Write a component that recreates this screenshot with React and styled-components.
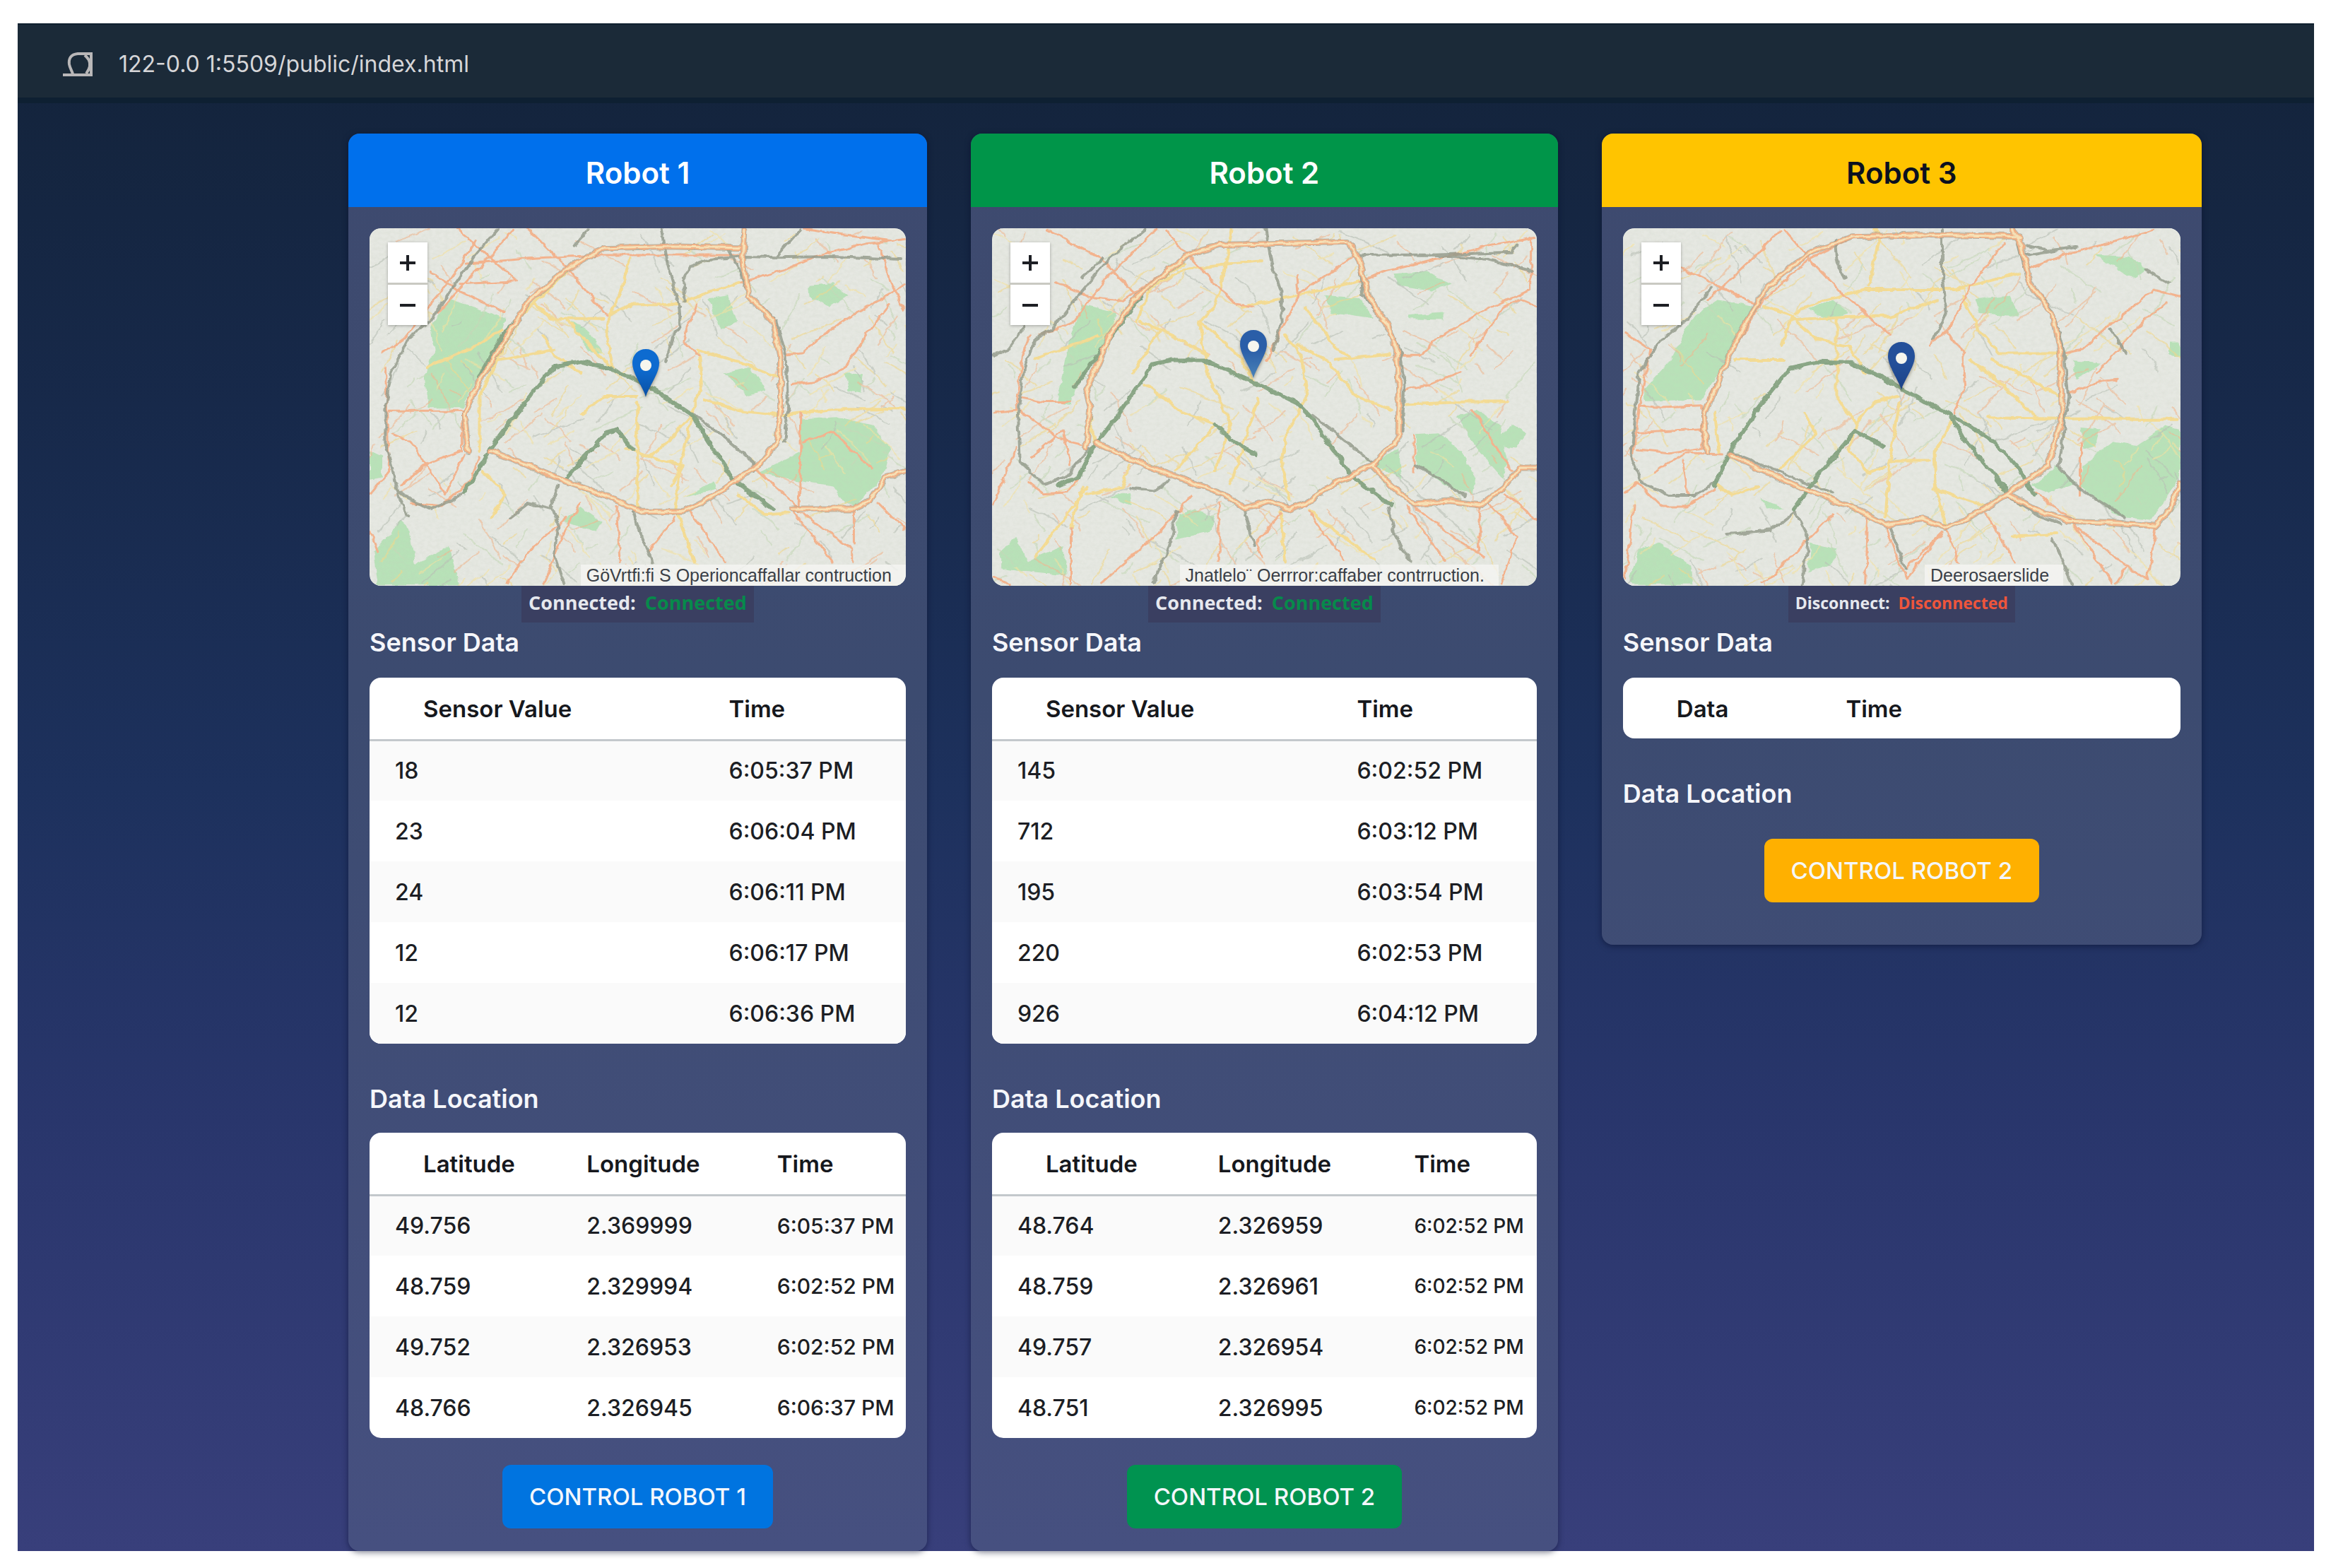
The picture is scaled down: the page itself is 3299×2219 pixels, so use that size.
import React from "react";
import styled, { createGlobalStyle } from "styled-components";

const robots = [
  {
    id: 1,
    name: "Robot 1",
    color: "#0070ec",
    buttonColor: "#0074e0",
    titleColor: "#ffffff",
    statusLabel: "Connected:",
    status: "Connected",
    online: true,
    attribution: "GöVrtfi:fi S Operioncaffallar contruction",
    attributionGap: "0",
    pin: { x: 51.5, y: 47.5, color: "#0d6bd0", dark: "#0a4fa3" },
    sensorColumns: [
      { label: "Sensor Value", width: "67%" },
      { label: "Time", width: "33%" },
    ],
    sensors: [
      ["18", "6:05:37 PM"],
      ["23", "6:06:04 PM"],
      ["24", "6:06:11 PM"],
      ["12", "6:06:17 PM"],
      ["12", "6:06:36 PM"],
    ],
    locationColumns: [
      { label: "Latitude", width: "40.5%" },
      { label: "Longitude", width: "35.5%" },
      { label: "Time", width: "24%", size: "30px" },
    ],
    locations: [
      ["49.756", "2.369999", "6:05:37 PM"],
      ["48.759", "2.329994", "6:02:52 PM"],
      ["49.752", "2.326953", "6:02:52 PM"],
      ["48.766", "2.326945", "6:06:37 PM"],
    ],
    action: "CONTROL ROBOT 1",
  },
  {
    id: 2,
    name: "Robot 2",
    color: "#009549",
    buttonColor: "#009350",
    titleColor: "#ffffff",
    statusLabel: "Connected:",
    status: "Connected",
    online: true,
    attribution: "Jnatlelo¨ Oerrror:caffaber contrruction.",
    attributionGap: "7%",
    pin: { x: 48, y: 42, color: "#2a5ea8", dark: "#4a83b8" },
    sensorColumns: [
      { label: "Sensor Value", width: "67%" },
      { label: "Time", width: "33%" },
    ],
    sensors: [
      ["145", "6:02:52 PM"],
      ["712", "6:03:12 PM"],
      ["195", "6:03:54 PM"],
      ["220", "6:02:53 PM"],
      ["926", "6:04:12 PM"],
    ],
    locationColumns: [
      { label: "Latitude", width: "41.5%" },
      { label: "Longitude", width: "36%" },
      { label: "Time", width: "22.5%", size: "28px" },
    ],
    locations: [
      ["48.764", "2.326959", "6:02:52 PM"],
      ["48.759", "2.326961", "6:02:52 PM"],
      ["49.757", "2.326954", "6:02:52 PM"],
      ["48.751", "2.326995", "6:02:52 PM"],
    ],
    action: "CONTROL ROBOT 2",
  },
  {
    id: 3,
    name: "Robot 3",
    color: "#ffc400",
    buttonColor: "#ffb000",
    titleColor: "#0b1020",
    statusLabel: "Disconnect:",
    status: "Disconnected",
    online: false,
    attribution: "Deerosaerslide",
    attributionGap: "21%",
    pin: { x: 50, y: 45.5, color: "#24509a", dark: "#1c4288" },
    sensorColumns: [
      { label: "Data", width: "40%" },
      { label: "Time", width: "60%" },
    ],
    sensors: [],
    locationColumns: [],
    locations: [],
    action: "CONTROL ROBOT 2",
  },
];

const maps = {
  1: {
    viewBox: [78, 57, 1425, 1240],
    parks: [
      "M290 300L440 370L425 430L380 540L325 680H235L225 560L250 480L240 400Z",
      "M1225 720L1320 712L1415 740L1460 820L1440 920L1370 1020L1340 1010L1310 950L1200 930L1110 905L1225 830Z",
      "M1245 255L1310 248L1350 290L1300 330L1250 300Z",
      "M90 1180L160 1070L185 1100L200 1220L290 1160L315 1295H100Z",
      "M595 1070L640 1025L695 1075L680 1110Z",
      "M1020 560L1090 540L1130 620L1080 640Z",
      "M980 300L1030 290L1055 380L1010 410Z",
      "M1340 560L1390 560L1385 630L1350 620Z",
      "M610 380L650 400L700 490L660 480Z",
      "M920 990L990 935L1000 960Z",
      "M78 830L110 850L110 920L78 930Z",
    ],
    green: [
      "M400 820L480 680L570 535L640 520L720 545L780 580",
      "M780 580L845 625L935 705L980 800L1045 930L1150 1030",
      "M400 820L370 890L330 970",
      "M600 925L655 840L710 765L735 755L775 825",
      "M370 570L430 430L480 360",
    ],
    rail: [
      "M418 60L360 150L300 260L240 380L180 440L135 560L120 680L120 800L140 900L160 1000L180 1055",
      "M160 970L190 1000L240 1030L300 1000L340 960",
      "M855 60L870 180L900 320L905 400L885 430L865 520",
      "M1490 165L1310 155L1160 158L1080 155L980 165L930 190L910 240L915 310",
      "M1220 65L1160 155",
      "M660 65L620 120",
      "M935 700L1000 760L1100 870L1100 900",
      "M1160 380L1185 500L1190 680L1180 800",
      "M580 950L560 1020L580 1090L570 1190L595 1290",
      "M560 1030L500 1010L450 1060",
      "M780 1040L800 1120L830 1215",
      "M1030 130L1060 200L1085 290L1150 370",
    ],
    motorway: [
      "M400 830L500 880L600 935L720 990L800 1040L910 1040L1000 980L1110 880L1160 800L1170 690L1170 500L1150 380L1085 290L1070 180L1075 60",
      "M1200 1030H1365L1410 1000L1450 920L1500 900",
      "M340 830L330 700L370 590L440 440L500 310L600 200L700 125L860 120L1060 125",
    ],
    orange: [
      "M460 60L400 150L330 250L260 350",
      "M500 60L600 190L710 360",
      "M310 60L400 160L470 240L320 250",
      "M240 210L310 270L440 350",
      "M360 100L290 240L170 440L115 490",
      "M130 690H325V830L220 880L160 950",
      "M140 770L190 800L280 980L330 840",
      "M120 540L130 900L80 980",
      "M190 1010L270 1020L340 940L370 850",
      "M1065 245L1180 200L1260 155L1400 110L1500 95",
      "M1190 495L1230 490L1300 410L1400 330L1470 280L1500 250",
      "M1430 110L1460 240L1500 340",
      "M1200 600L1260 590L1340 545L1400 420L1460 320",
      "M1230 60L1460 100",
      "M330 180L520 160L700 150H1060",
      "M950 320L910 450L955 500",
      "M735 1020L745 1215",
      "M890 1060L820 1180",
      "M930 1040L1025 1215",
      "M1220 1040L1360 1170V1215",
      "M1365 1040V1150",
      "M1200 1030L1310 1215",
      "M1105 890L1220 1030L1225 700",
      "M1230 800L1310 760L1410 890",
      "M600 1060L500 1180L440 1290",
      "M80 1110L100 1180",
      "M540 1290L600 1100L640 1010",
      "M1430 1010L1500 1100",
    ],
    yellow: [
      "M790 660L790 1030",
      "M600 210L560 260L480 360L430 480L370 640L370 830",
      "M770 160L745 280L715 360L710 450L725 540",
      "M520 320L560 370L700 370",
      "M600 370L640 430L720 540",
      "M915 310L1060 245",
      "M720 355L780 320L900 320",
      "M955 490L960 600L935 700L870 800L820 850L760 820",
      "M950 480L1060 520L1160 570",
      "M970 650L1060 690L1170 705L1310 685H1500",
      "M935 710L900 900L890 1030",
      "M820 850L910 880L880 950",
      "M400 520L570 480",
      "M640 700L700 640L790 640",
      "M380 900L440 980L400 1060",
      "M1060 980L1130 1050L1190 1045",
      "M900 1050L940 1215",
      "M230 540L350 470L430 410",
      "M540 430L570 500L640 560",
    ],
  },
  2: {
    viewBox: [68, 57, 1397, 1243],
    parks: [
      "M300 320L385 350L370 440L300 560L270 670L235 660L260 480Z",
      "M1155 775L1215 770L1270 830L1310 930L1300 985L1230 950L1155 880Z",
      "M1260 710L1310 690L1370 740L1390 860L1380 930L1310 820Z",
      "M1375 770L1400 740L1440 770L1410 820L1380 815Z",
      "M1100 215L1180 208L1245 250L1200 275L1110 255Z",
      "M90 1180L130 1130L160 1215L250 1160L260 1265L180 1255L90 1240Z",
      "M545 1050L590 1035L640 1060L630 1110L540 1140Z",
      "M920 290L1010 300L1050 370L940 350Z",
      "M1135 360L1230 350L1220 375L1140 372Z",
      "M1045 880L1110 820L1120 930Z",
      "M370 990L420 975L425 1020Z",
    ],
    green: [
      "M330 815L400 690L480 530L530 515L610 515L670 550L735 590",
      "M735 590L850 665L890 720L940 820L1000 930L1090 1020",
      "M330 815L290 920L240 950",
      "M640 740L690 800L745 845",
      "M280 610L370 440L450 290",
    ],
    rail: [
      "M460 60L370 160L290 290L220 410L180 440L150 540L135 700L140 870L200 945L260 920L320 820",
      "M770 60L785 180L810 280L812 380L790 480",
      "M1000 150H1080L1200 150L1340 165L1450 205",
      "M1200 150L1400 140L1415 115",
      "M1010 160L1020 290L1080 390L1115 490L1125 600L1120 760",
      "M890 705L960 780L1040 870",
      "M150 400L110 480L70 500",
      "M540 1040L525 1160L480 1290",
      "M715 1030L740 1160",
      "M1085 1030L1100 1120L1140 1215",
      "M520 930L490 970L420 960",
      "M1150 880L1220 930L1280 990",
      "M350 160L300 230",
    ],
    motorway: [
      "M335 800L430 865L540 920L660 980L715 1030L780 1005L830 1035L870 1015L940 950L1040 880L1110 790L1112 640L1105 480L1080 390L1035 300L1010 170L985 110",
      "M1040 880L1100 960L1150 1015L1240 1005L1320 1020L1380 960L1420 890L1465 890",
      "M310 820L320 680L310 620L370 430L440 290L570 150L650 115L800 110L980 105",
    ],
    orange: [
      "M490 60L430 140L360 230L280 380L190 430",
      "M210 65L340 155L440 290",
      "M230 245L330 300L400 310L560 160",
      "M515 65L570 150L690 320L740 330",
      "M145 645L200 660H270",
      "M140 690L240 790L300 810",
      "M75 700L130 690L145 500L165 430",
      "M130 820L100 920L75 1020",
      "M160 940L200 980L260 975L290 920",
      "M170 850L250 760L270 880",
      "M1010 245L1070 210L1200 165L1340 120L1460 90",
      "M1120 500H1165L1210 440L1320 350L1450 270V90",
      "M1125 620L1190 600L1270 555",
      "M1295 500L1380 330L1420 305L1465 330",
      "M1000 150L860 280L770 520",
      "M850 220L855 280",
      "M580 985L500 1110L400 1230L350 1290",
      "M650 1010V1215",
      "M810 1045L745 1150L760 1200",
      "M880 1045L970 1210",
      "M1150 1025L1270 1150L1330 1200",
      "M1320 1025L1315 1190",
      "M1130 1020L1230 1215",
      "M1340 1010L1415 1130L1375 1290",
      "M1385 980L1465 1070",
      "M1150 780V900",
      "M1300 690L1400 900",
      "M75 1270L110 1295",
      "M270 1100V1295",
    ],
    yellow: [
      "M685 60L665 200L640 330L600 380L620 560L680 740L640 900",
      "M450 380L530 430L620 500",
      "M600 380L700 500L740 590",
      "M480 260L560 200L760 170",
      "M710 330L870 285L1010 240",
      "M820 430L860 490L875 640L820 780L810 870L830 1000",
      "M850 460L930 520L1000 640L1090 690",
      "M950 515L1090 495",
      "M870 330L950 470L990 510",
      "M750 650L720 780L680 950",
      "M320 700L330 800",
      "M180 510L340 430",
      "M310 980L400 960L420 880",
      "M460 600L560 700L640 740L540 900",
      "M1130 670L1290 660H1390",
      "M300 960L270 1100",
      "M880 1040L1050 1210",
      "M810 1040L820 1215",
      "M180 1200L310 960",
      "M440 380L480 250L560 180",
      "M430 560L500 410",
    ],
  },
  3: {
    viewBox: [84, 345, 1372, 1075],
    parks: [
      "M320 560L400 580L350 720L275 860L140 865L135 830L200 740L250 620Z",
      "M1215 1060L1290 985L1350 1000L1420 940L1456 950V1090L1385 1220L1300 1210L1210 1120Z",
      "M1245 425L1330 430L1375 470L1340 495Z",
      "M100 1400L125 1310L170 1290L210 1320L250 1360L255 1415H105Z",
      "M545 1290L610 1310L600 1350L540 1380Z",
      "M1090 1120L1150 1060L1200 1110L1130 1140Z",
      "M540 590L600 560L640 600L590 620Z",
      "M1210 940L1260 945L1250 1000L1215 1010Z",
      "M1430 690L1456 690V730L1430 725Z",
      "M950 560L1040 550L1060 610L960 600Z",
      "M1190 740L1260 750L1200 800Z",
      "M420 1155L480 1185L440 1190Z",
    ],
    green: [
      "M310 1120L345 1020L420 880L495 765L560 748L640 750L700 780L760 820",
      "M760 820L830 870L890 905L920 970L980 1060L1030 1140",
      "M900 910L1000 990L1060 1070L1095 1145",
      "M505 1190L570 1080L655 955L725 1000",
    ],
    rail: [
      "M300 525L240 620L170 690L125 780L115 900L105 1030L130 1110L200 1150L260 1150L310 1110",
      "M870 345L870 480L880 600L850 680",
      "M605 380L610 440L630 495",
      "M1075 395L1130 410L1200 400L1080 425",
      "M1055 380L1080 500L1140 590L1170 720L1180 850L1165 1000L1155 1060L1210 1130L1320 1215",
      "M1030 1150L1110 1210L1160 1235",
      "M505 1190L540 1280L525 1415",
      "M505 1200L450 1255L340 1265",
      "M740 1240L780 1370",
      "M1285 650L1320 720",
      "M1140 1280L1190 1415",
      "M1370 470L1430 510",
      "M350 1020L600 1140",
    ],
    motorway: [
      "M345 1025L430 1075L540 1135L660 1190L730 1235L820 1220L880 1245L930 1220L1030 1145L1130 1060L1165 920L1160 720L1140 600L1085 510L1065 400L1045 350",
      "M1030 1145L1100 1190L1180 1225L1290 1230L1395 1240L1430 1190L1456 1110",
      "M290 1020L285 900L330 770L380 640L440 520L540 420L650 370L860 365L1060 370",
    ],
    orange: [
      "M470 350L400 440L330 520L290 560",
      "M230 465L320 520L420 580",
      "M480 350L560 460L640 560L740 665",
      "M640 380L540 440L430 560L360 700L290 860",
      "M125 880L170 885L280 880",
      "M120 960L200 955L280 950",
      "M120 1010L200 1020L280 1005V880",
      "M90 660L150 710L125 880L110 1020",
      "M120 1110L180 1180L240 1180L310 1130",
      "M230 1040L245 1150",
      "M160 1080L240 1020L330 1025",
      "M1085 465L1180 420L1280 390L1390 350",
      "M1175 720L1215 710L1290 630L1390 530L1456 550",
      "M1180 840L1260 805L1300 800",
      "M1250 780L1370 620L1420 570",
      "M1020 390L940 520L890 640L840 700",
      "M880 650L920 720L925 820L900 900",
      "M600 1205L430 1415",
      "M685 1215L680 1415",
      "M730 1240L780 1400L870 1260",
      "M870 1260L780 1370",
      "M975 1200L1050 1350",
      "M1190 1230L1310 1350L1375 1400L1395 1250",
      "M1100 1140L1190 1225L1290 1415",
      "M1210 990V1150",
      "M880 1250L910 1350",
      "M90 1140L120 1110",
      "M1320 1360L1300 1415",
      "M110 1180L90 1400",
    ],
    yellow: [
      "M715 370L690 520",
      "M430 580L500 610L560 680L640 700L680 780",
      "M510 600L580 560L680 530L900 530L1060 480",
      "M500 620L640 610H740L860 560",
      "M610 620V860L660 940L640 1010",
      "M920 550L960 650L1010 720L1160 720",
      "M940 740L1000 800L1100 910",
      "M360 740H460L480 740",
      "M765 870L740 1050L730 1215",
      "M900 920L850 1020L855 1140L880 1240",
      "M980 915L1160 918H1450",
      "M640 1010L690 1080L730 1060",
      "M740 1045L840 1045",
      "M470 1070L560 960L530 900",
      "M310 900L320 1020",
      "M660 930L700 870L760 850",
      "M990 740L1090 800L1160 850",
      "M700 350L720 370",
      "M850 1130L980 1180",
      "M1040 1270L1150 1265",
      "M310 1110L350 1150L420 1120",
      "M500 610L475 700",
    ],
  },
};

// small repeatable generator so the side streets stay put between renders
function sideStreets(seed, [x, y, w, h]) {
  let n = seed * 7919;
  const next = () => {
    n = (n * 1103515245 + 12345) % 2147483648;
    return n / 2147483648;
  };
  const colors = ["#f3d98b", "#f2b78f", "#b9c0b6", "#f5e3a0", "#c6d9b8"];
  return Array.from({ length: 380 }, () => {
    const sx = x + next() * w;
    const sy = y + next() * h;
    const angle = (next() < 0.5 ? 0.9 : 2.3) + (next() - 0.5) * 0.8;
    const len = 30 + next() * 130;
    const mx = sx + Math.cos(angle) * len * 0.5 + next() * 14;
    const my = sy + Math.sin(angle) * len * 0.5;
    const ex = sx + Math.cos(angle) * len;
    const ey = sy + Math.sin(angle) * len;
    return {
      d: `M${sx.toFixed(0)} ${sy.toFixed(0)}Q${mx.toFixed(0)} ${my.toFixed(0)} ${ex.toFixed(0)} ${ey.toFixed(0)}`,
      color: colors[Math.floor(next() * colors.length)],
    };
  });
}

function Lines({ paths, color, width, opacity = 1 }) {
  return (
    <g
      fill="none"
      stroke={color}
      strokeWidth={width}
      opacity={opacity}
      strokeLinecap="round"
      strokeLinejoin="round"
    >
      {paths.map((d) => (
        <path key={d} d={d} vectorEffect="non-scaling-stroke" />
      ))}
    </g>
  );
}

function CityMap({ id }) {
  const map = maps[id];
  const [x, y, w, h] = map.viewBox;
  return (
    <MapDrawing viewBox={map.viewBox.join(" ")} preserveAspectRatio="none" aria-hidden="true">
      <defs>
        <filter id={`sketch${id}`} x="0" y="0" width="100%" height="100%">
          <feTurbulence type="fractalNoise" baseFrequency="0.03" numOctaves="3" seed={id} />
          <feDisplacementMap in="SourceGraphic" scale="16" xChannelSelector="R" yChannelSelector="G" />
        </filter>
        <filter id={`paper${id}`} x="0" y="0" width="100%" height="100%">
          <feTurbulence type="fractalNoise" baseFrequency="0.09" numOctaves="3" seed={id + 4} />
          <feColorMatrix values="0 0 0 0 0.55  0 0 0 0 0.6  0 0 0 0 0.5  0.9 0 0 0 -0.3" />
        </filter>
      </defs>
      <rect x={x} y={y} width={w} height={h} fill="#e6e8e2" />
      <g filter={`url(#sketch${id})`}>
        <rect x={x} y={y} width={w} height={h} fill="#e6e8e2" />
        <g fill="#b8e2b8">
          {map.parks.map((d) => (
            <path key={d} d={d} />
          ))}
        </g>
        <g fill="none" strokeWidth="2" opacity="0.6">
          {sideStreets(id, map.viewBox).map((s) => (
            <path key={s.d} d={s.d} stroke={s.color} vectorEffect="non-scaling-stroke" />
          ))}
        </g>
        <Lines paths={map.yellow} color="#f6dc92" width={4} />
        <Lines paths={map.orange} color="#f5b28c" width={3} />
        <Lines paths={map.rail} color="#949b8c" width={4} opacity={0.85} />
        <Lines paths={map.green} color="#87a483" width={6} />
        <Lines paths={map.motorway} color="#a3a08c" width={9} opacity={0.7} />
        <Lines paths={map.motorway} color="#f4b084" width={7} />
        <Lines paths={map.motorway} color="#f9e2b6" width={3} />
      </g>
      <rect x={x} y={y} width={w} height={h} filter={`url(#paper${id})`} opacity="0.35" />
    </MapDrawing>
  );
}

function RobotMap({ robot }) {
  return (
    <MapFrame>
      <CityMap id={robot.id} />
      <ZoomControl>
        <ZoomButton type="button" aria-label="Zoom in">
          <svg width="24" height="24" viewBox="0 0 24 24" stroke="#1d1f24" strokeWidth="4">
            <path d="M12 1v22M1 12h22" />
          </svg>
        </ZoomButton>
        <ZoomButton type="button" aria-label="Zoom out">
          <svg width="24" height="24" viewBox="0 0 24 24" stroke="#1d1f24" strokeWidth="4">
            <path d="M1 12h22" />
          </svg>
        </ZoomButton>
      </ZoomControl>
      <Pin
        viewBox="0 0 40 70"
        style={{ left: `${robot.pin.x}%`, top: `${robot.pin.y}%` }}
      >
        <defs>
          <linearGradient id={`pin${robot.id}`} x1="0" y1="0" x2="0" y2="1">
            <stop offset="0.4" stopColor={robot.pin.color} />
            <stop offset="1" stopColor={robot.pin.dark} />
          </linearGradient>
        </defs>
        <path
          d="M20 69C17 56 1 36 1 21C1 9 9 1 20 1S39 9 39 21C39 36 23 56 20 69Z"
          fill={`url(#pin${robot.id})`}
        />
        <circle cx="20" cy="24" r="8" fill="#f6f6ee" />
      </Pin>
      <Attribution $gap={robot.attributionGap}>{robot.attribution}</Attribution>
    </MapFrame>
  );
}

function DataTable({ label, columns, rows }) {
  return (
    <TableFrame>
      <Table aria-label={label}>
        <colgroup>
          {columns.map((column) => (
            <col key={column.label} style={{ width: column.width }} />
          ))}
        </colgroup>
        <thead>
          <tr>
            {columns.map((column) => (
              <HeadCell key={column.label} $ruled={rows.length > 0}>
                {column.label}
              </HeadCell>
            ))}
          </tr>
        </thead>
        <tbody>
          {rows.map((row, index) => (
            <Row key={index}>
              {row.map((value, i) => (
                <Cell key={i} $size={columns[i].size}>
                  {value}
                </Cell>
              ))}
            </Row>
          ))}
        </tbody>
      </Table>
    </TableFrame>
  );
}

function RobotCard({ robot }) {
  const empty = robot.locations.length === 0;
  return (
    <Card>
      <CardHeader $color={robot.color} $text={robot.titleColor}>
        {robot.name}
      </CardHeader>
      <CardBody $empty={empty}>
        <RobotMap robot={robot} />
        <Status $small={!robot.online}>
          {robot.statusLabel} <StatusValue $online={robot.online}>{robot.status}</StatusValue>
        </Status>
        <SectionTitle>Sensor Data</SectionTitle>
        <DataTable
          label={`${robot.name} sensor data`}
          columns={robot.sensorColumns}
          rows={robot.sensors}
        />
        <SectionTitle $spaced>Data Location</SectionTitle>
        {!empty && (
          <DataTable
            label={`${robot.name} data location`}
            columns={robot.locationColumns}
            rows={robot.locations}
          />
        )}
        <ControlButton type="button" $color={robot.buttonColor} $empty={empty}>
          {robot.action}
        </ControlButton>
      </CardBody>
    </Card>
  );
}

function App() {
  return (
    <>
      <GlobalStyle />
      <Page>
        <AddressBar>
          <svg width="46" height="38" viewBox="0 0 46 38" fill="none" stroke="#b9b7b8" strokeWidth="4">
            <path d="M1 34H43M41 35V4H22C12 5 9 11 10 19C11 25 14 28 15 33M32 6C37 11 40 14 39 22C38 27 36 29 34 32" />
          </svg>
          <Address href="#">122-0.0 1:5509/public/index.html</Address>
        </AddressBar>
        <Robots>
          {robots.map((robot) => (
            <RobotCard key={robot.id} robot={robot} />
          ))}
        </Robots>
      </Page>
    </>
  );
}

const GlobalStyle = createGlobalStyle`
  * {
    box-sizing: border-box;
  }

  body {
    margin: 0;
    background: #ffffff;
    font-family: Inter, Roboto, sans-serif;
  }
`;

const Page = styled.div`
  display: flex;
  flex-direction: column;
  min-height: calc(100vh - 59px);
  margin: 33px 24px 24px 25px;
  background: linear-gradient(180deg, #13233a 0%, #17294a 25%, #1d315d 50%, #29366c 72%, #383f7b 100%);
`;

const AddressBar = styled.header`
  display: flex;
  align-items: center;
  gap: 34px;
  height: 113px;
  padding-left: 63px;
  padding-top: 8px;
  background: #1b2a38;
  border-top: 2px solid #10202f;
  border-bottom: 8px solid #0e2032;
`;

const Address = styled.a`
  color: #d6d6d8;
  font-size: 32px;
  line-height: 40px;
  text-decoration: none;
`;

const Robots = styled.main`
  display: grid;
  grid-template-columns: 820fr 832fr 850fr;
  align-items: start;
  gap: 62px;
  padding: 43px 4.9% 0 14.4%;
`;

const Card = styled.section`
  overflow: hidden;
  background: linear-gradient(180deg, #3e4a6f, #3c4b70 800px, #465080 2000px);
  border-radius: 16px;
  box-shadow: 0 2px 8px rgba(5, 12, 40, 0.5);
`;

const CardHeader = styled.h1`
  margin: 0;
  padding: 8px 0 0;
  background: ${({ $color }) => $color};
  color: ${({ $text }) => $text};
  font-size: 42px;
  font-weight: 600;
  line-height: 96px;
  text-align: center;
`;

const CardBody = styled.div`
  display: flex;
  flex-direction: column;
  padding: 30px 30px ${({ $empty }) => ($empty ? "60px" : "32px")};
`;

const MapFrame = styled.div`
  position: relative;
  height: 506px;
  overflow: hidden;
  border-radius: 16px;
`;

const MapDrawing = styled.svg`
  display: block;
  width: 100%;
  height: 100%;
`;

const ZoomControl = styled.div`
  position: absolute;
  top: 20px;
  left: 26px;
  display: flex;
  flex-direction: column;
  gap: 3px;
  background: #c9c9c2;
  box-shadow: 0 1px 4px rgba(0, 0, 0, 0.3);
`;

const ZoomButton = styled.button`
  display: grid;
  place-items: center;
  width: 56px;
  height: 57px;
  padding: 0;
  border: 0;
  background: #ffffff;
`;

const Pin = styled.svg`
  position: absolute;
  width: 40px;
  height: 70px;
  transform: translate(-50%, -100%);
  filter: drop-shadow(0 3px 2px rgba(70, 50, 20, 0.4));
`;

const Attribution = styled.p`
  position: absolute;
  right: ${({ $gap }) => $gap};
  bottom: 0;
  margin: 0;
  padding: 0 20px 0 8px;
  background: rgba(245, 245, 242, 0.8);
  color: #3a3f47;
  font-family: "Liberation Sans", Arial, sans-serif;
  font-size: 25px;
  line-height: 30px;
  white-space: nowrap;
`;

const Status = styled.p`
  align-self: center;
  margin: 0;
  padding: 4px 10px 8px;
  background: #3a3f61;
  color: #e6e8ee;
  font-family: "Open Sans", sans-serif;
  font-size: ${({ $small }) => ($small ? "23px" : "27px")};
  font-weight: 700;
  line-height: 40px;
`;

const StatusValue = styled.span`
  margin-left: 6px;
  color: ${({ $online }) => ($online ? "#078a4b" : "#ee553c")};
`;

const SectionTitle = styled.h2`
  margin: ${({ $spaced }) => ($spaced ? "50px 0 20px" : "0 0 22px")};
  color: #f5f6fa;
  font-size: 36px;
  font-weight: 600;
  line-height: 56px;
`;

const TableFrame = styled.div`
  overflow: hidden;
  background: #ffffff;
  border-radius: 16px;
`;

const Table = styled.table`
  width: 100%;
  table-layout: fixed;
  border-collapse: collapse;
`;

const HeadCell = styled.th`
  height: ${({ $ruled }) => ($ruled ? "88px" : "86px")};
  padding: 2px 0 0;
  border-bottom: ${({ $ruled }) => ($ruled ? "3px solid #c3c8cc" : "0")};
  color: #16181d;
  font-size: 33px;
  font-weight: 600;
  text-align: left;

  &:first-child {
    padding-left: 76px;
  }
`;

const Row = styled.tr`
  &:nth-child(odd) {
    background: #fafafa;
  }
`;

const Cell = styled.td`
  height: 86px;
  padding: 0;
  color: #1c1e24;
  font-size: ${({ $size = "32px" }) => $size};
  font-weight: 500;
  white-space: nowrap;

  &:first-child {
    padding-left: 36px;
  }
`;

const ControlButton = styled.button`
  align-self: center;
  margin-top: ${({ $empty }) => ($empty ? "16px" : "38px")};
  padding: 0 38px;
  border: 0;
  border-radius: 12px;
  background: ${({ $color }) => $color};
  color: #f4f7fc;
  font-family: inherit;
  font-size: 33px;
  font-weight: 500;
  line-height: 90px;
`;

export default App;
